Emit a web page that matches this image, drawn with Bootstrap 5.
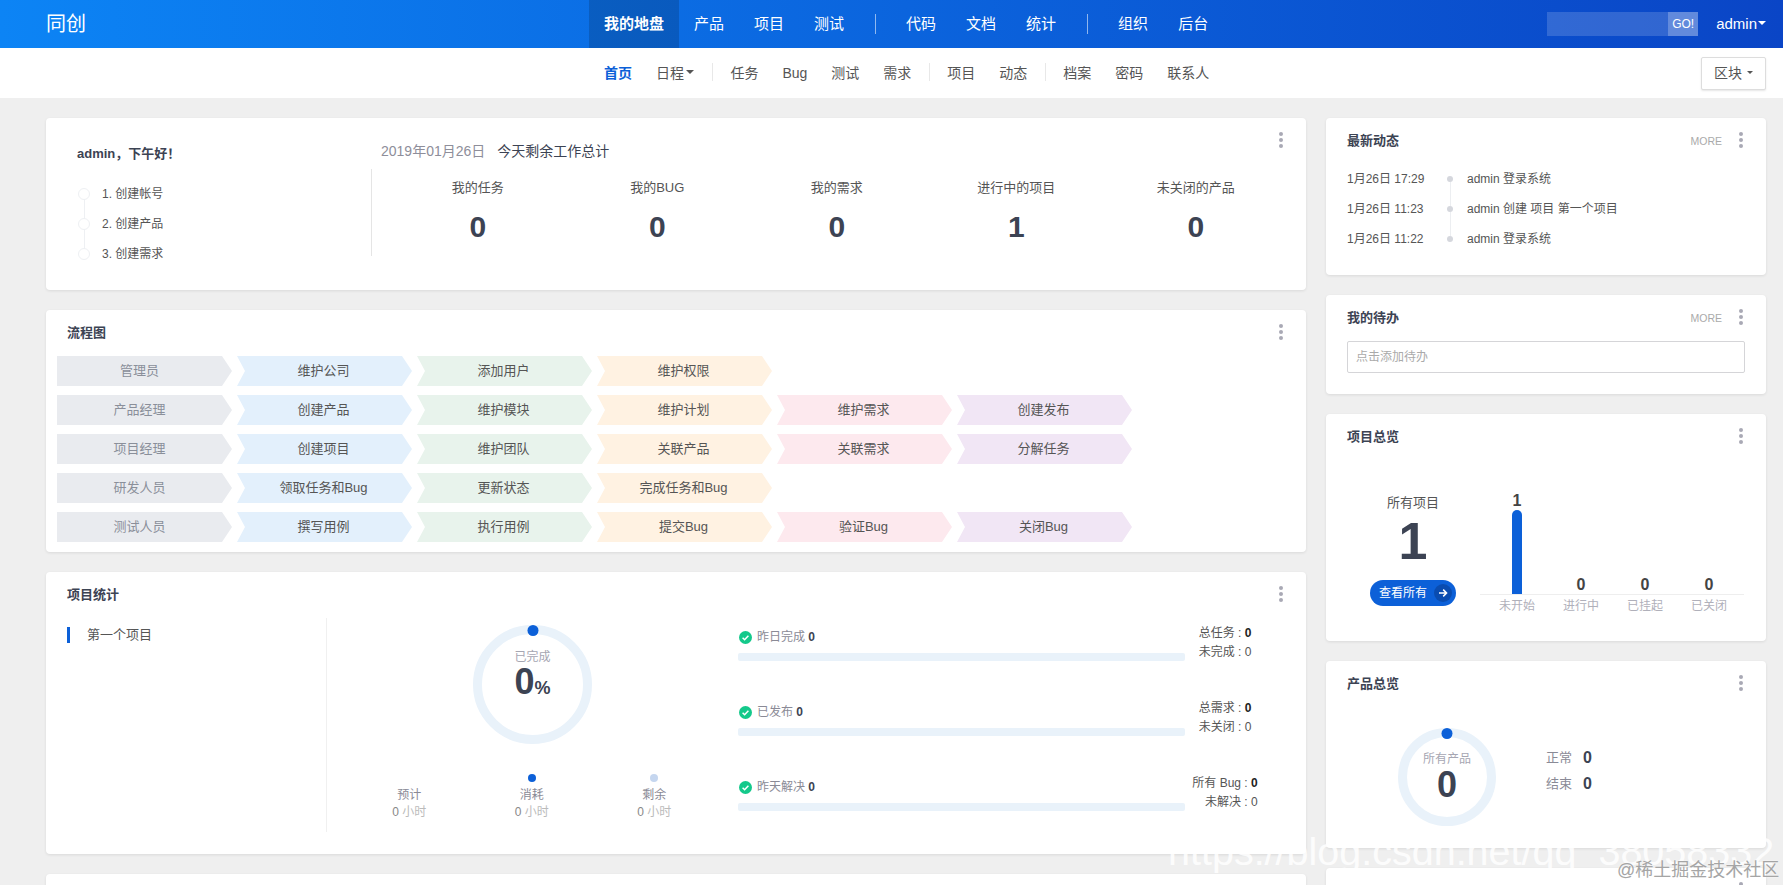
<!DOCTYPE html>
<html lang="zh-CN">
<head>
<meta charset="utf-8">
<title>同创</title>
<link href="https://cdn.jsdelivr.net/npm/bootstrap@5.3.0/dist/css/bootstrap.min.css" rel="stylesheet">
<style>
html,body{height:885px;overflow:hidden}
body{background:#efefef;font-family:"Liberation Sans","Noto Sans CJK SC",sans-serif;font-size:12px;color:#555;position:relative}
.top-bar{height:48px;background:linear-gradient(90deg,#0c84f5,#0a45c6);padding:0 17px 0 46px}
.brand-name{font-size:20px;color:#fff;width:40px;line-height:48px;margin-right:503px;white-space:nowrap}
.main-nav .nav-link{color:#fff;font-size:15px;line-height:48px;padding:0 15px}
.main-nav .nav-link.active{background:rgba(0,0,0,.16);font-weight:700}
.bar-sep{width:1px;height:20px;background:rgba(255,255,255,.55);margin:14px 15px 0 16px}
.search-box{width:151px;height:24px}
.search-box .form-control{height:24px;min-height:24px;background:rgba(255,255,255,.16);border:0;border-radius:0;padding:0}
.search-box .btn{width:30px;flex:none;height:24px;padding:0;border:0;border-radius:0;font-size:12px;color:#fff;background:rgba(255,255,255,.36)}
.user-link{color:#fff;font-size:15px;margin-left:18px;text-decoration:none}
.user-link::after{margin-left:1px;border-width:.28em .28em 0}
.sub-bar{height:50px;background:#fff;padding:0 17px 0 592px}
.sub-nav .nav-link{color:#555;font-size:14px;line-height:50px;padding:0 12px}
.sub-nav .nav-link.active{color:#0c60d8;font-weight:700}
.sub-nav .dropdown-toggle::after{margin-left:2.4px}
.sub-sep{width:1px;height:18px;background:#e8e8e8;margin:15px 5px 0 6px}
.block-btn{width:65px;height:33px;padding:0;font-size:14px;color:#555;background:#fff;border:1px solid #ddd;box-shadow:0 1px 2px rgba(0,0,0,.1);border-radius:2px}
.block-btn::after{border-width:.28em .28em 0;margin-left:5px}
.page-body{padding:20px 17px 0 46px;gap:20px}
.left-side{width:1260px;flex:none}
.right-side{width:440px;flex:none}
.panel{border:0;border-radius:4px;box-shadow:0 1px 3px rgba(0,0,0,.09);margin-bottom:20px;position:relative}
.panel-tail{height:120px}
.panel-head{height:46px;padding:13px 21px 0;display:flex;line-height:20px}
.panel-name{font-size:13px;font-weight:700;color:#3c4353}
.more-link{margin-left:auto;margin-right:23px;font-size:10.5px;color:#aaa;text-decoration:none}
.kebab{position:absolute;top:14px;right:23px;width:4px;height:16px;display:block}
.hello-panel{height:172px}
.hello-left{width:325px;padding:26px 0 0 31px;flex:none}
.hello-title{font-size:13px;font-weight:700;color:#3c4353;line-height:20px;margin-bottom:15px}
.step-row{height:30px;line-height:30px;position:relative;padding-left:25px;font-size:12px}
.step-row::before{content:"";position:absolute;left:1px;top:9px;width:12px;height:12px;border-radius:50%;background:#fff;border:1px solid #eef0f3;z-index:1}
.step-row:not(:last-child)::after{content:"";position:absolute;left:7px;top:20px;width:1px;height:20px;background:#eef0f3}
.hello-right{padding:23px 0 0;flex:1}
.today-line{line-height:20px;font-size:14px;padding-left:10px;color:#3c4353}
.today-date{color:#8e8e9a;margin-right:12px}
.count-row{margin-top:8px;height:87px;border-left:1px solid #e5e5e5;padding-left:16px}
.count-cell{width:179.5px;text-align:center;padding-top:9px}
.count-label{font-size:13px;line-height:20px}
.count-num{font-size:30px;font-weight:700;line-height:36px;margin-top:11px;color:#3c4353}
.flow-wrap{padding:0 0 1px 11px}
.flow-row{display:flex;gap:5px;margin-bottom:9px}
.flow-item{width:175px;height:30px;line-height:30px;text-align:center;font-size:13px;padding-right:2px;clip-path:polygon(0 0,165px 0,175px 50%,165px 100%,0 100%,8px 50%)}
.flow-role{background:#e9ebef;color:#8a8f9a;padding-right:10px;clip-path:polygon(0 0,165px 0,175px 50%,165px 100%,0 100%)}
.tone-blue{background:#e3f0fc}.tone-green{background:#e8f3ec}.tone-orange{background:#fff2e2}.tone-pink{background:#fde9ee}.tone-purple{background:#f1e6f5}
.stats-panel{height:282px}
.project-list{width:280px;flex:none;padding:9px 0 0 21px}
.project-item{border-left:3px solid #0c60d8;padding-left:17px;line-height:16px;font-size:13px}
.stats-mid{width:412px;flex:none;height:214px;border-left:1px solid #f0f0f0;padding-top:7px}
.dial{border-style:solid;border-color:#e9f2fa;border-radius:50%;position:relative;text-align:center}
.dial-lg{width:119px;height:119px;border-width:9px;margin:0 auto;padding-top:14px}
.dial-sm{width:98px;height:98px;border-width:9px;padding-top:13px;flex:none}
.dial-dot{position:absolute;left:50%;transform:translateX(-50%);top:-9px;width:11px;height:11px;border-radius:50%;background:#0c60d8}
.dial-cap{line-height:18px;color:#a6a6b2;font-size:12px}
.dial-num{font-size:36px;font-weight:700;line-height:32px;color:#3c4353}
.dial-num span{font-size:18px}
.dial-sm .dial-num{font-size:36px;line-height:40px;margin-top:-3px}
.time-row{margin-top:30px;padding:0 21px}
.time-cell{width:122.5px;text-align:center}
.time-dot{width:8px;height:8px;border-radius:50%;margin:0 auto 5px}
.time-used{background:#0c60d8}
.time-left{background:#c5d6ef}
.time-name{line-height:17px;color:#8a8a96}
.time-val{line-height:17px;color:#888}
.time-val span{color:#bbb}
.metric-row{height:75px;display:flex}
.metric-left{width:447px;padding-top:10px;flex:none}
.metric-label{line-height:18px;color:#8a8a96;display:flex;align-items:center;gap:5px;padding-left:1px}
.metric-label b{color:#3c4353}
.metric-track{height:8px;margin-top:7px;background:#e9f2fa;border-radius:2px}
.metric-side{width:80px;padding-top:6px;display:flex;justify-content:center}
.metric-meta{text-align:right;line-height:19px;white-space:nowrap}
.metric-meta b{color:#222}
.feed-row{height:30px;line-height:30px;padding-left:21px;display:flex;position:relative}
.feed-list{padding-bottom:21px}
.feed-time{width:100px;flex:none}
.feed-mark{width:6px;flex:none;position:relative;margin-right:14px}
.feed-mark::before{content:"";position:absolute;top:12px;left:0;width:6px;height:6px;border-radius:50%;background:#d5d7dd}
.feed-row:not(:last-child) .feed-mark::after{content:"";position:absolute;top:18px;left:3px;width:1px;height:24px;background:#eceef1}
.todo-wrap{padding:0 21px 21px}
.todo-input{height:32px;min-height:32px;font-size:12px;border-radius:2px;border-color:#d5d5d8;padding:0 8px}
.todo-input::placeholder{color:#aaa}
.overview-panel{height:227px}
.overview-left{width:154px;padding:34px 0 0 20px;flex:none;text-align:center}
.overview-cap{line-height:18px;font-size:13px}
.overview-num{font-size:52px;font-weight:700;line-height:56px;margin-top:1px;color:#3c4353}
.view-all{width:86px;height:26px;margin-top:11px;padding:0 4px 0 9px;font-size:12px;border:0;background:#0c60d8;display:inline-flex;align-items:center;justify-content:space-between}
.view-all i{width:18px;height:18px;border-radius:50%;background:#0a4cb0;display:flex;align-items:center;justify-content:center}
.chart-box{width:264px;margin-top:34px}
.chart-plot{height:101px;border-bottom:1px solid #eee;padding:0 3px 0 5px;display:flex;align-items:flex-end}
.chart-col{width:64px;text-align:center;display:flex;flex-direction:column;align-items:center}
.chart-val{font-size:16px;font-weight:700;line-height:16px;color:#444;margin-bottom:1px}
.chart-bar{width:10px;height:84px;border-radius:5px 5px 0 0;background:#0c60d8}
.chart-names{padding:2px 3px 0 5px;display:flex}
.chart-names span{width:64px;text-align:center;line-height:18px;color:#b0b0ba}
.product-wrap{display:flex;padding:21px 0 22px 72px}
.product-side{margin:17px 0 0 50px}
.product-line{line-height:26px;font-size:13px;color:#8a8a96;display:flex}
.product-line span{width:37px}
.product-line b{font-size:16px;color:#3c4353}
.mark-layer{position:absolute;left:1168px;top:827px;font-size:39.5px;color:rgba(255,255,255,.85);white-space:nowrap;line-height:48px;pointer-events:none}
.site-layer{position:absolute;left:1617px;top:858px;font-size:18px;line-height:24px;color:#a5a5a5;text-shadow:0 0 2px #fff;white-space:nowrap;pointer-events:none}
</style>
</head>
<body>
<header class="top-bar d-flex align-items-center">
  <div class="brand-name">同创</div>
  <ul class="nav main-nav flex-nowrap">
    <li class="nav-item"><a class="nav-link active" href="#">我的地盘</a></li>
    <li class="nav-item"><a class="nav-link" href="#">产品</a></li>
    <li class="nav-item"><a class="nav-link" href="#">项目</a></li>
    <li class="nav-item"><a class="nav-link" href="#">测试</a></li>
    <li class="bar-sep"></li>
    <li class="nav-item"><a class="nav-link" href="#">代码</a></li>
    <li class="nav-item"><a class="nav-link" href="#">文档</a></li>
    <li class="nav-item"><a class="nav-link" href="#">统计</a></li>
    <li class="bar-sep"></li>
    <li class="nav-item"><a class="nav-link" href="#">组织</a></li>
    <li class="nav-item"><a class="nav-link" href="#">后台</a></li>
  </ul>
  <div class="ms-auto d-flex align-items-center">
    <div class="search-box d-flex"><input class="form-control" type="text" aria-label="搜索"><button class="btn" type="button">GO!</button></div>
    <a class="user-link dropdown-toggle" href="#">admin</a>
  </div>
</header>
<div class="sub-bar d-flex align-items-center">
  <ul class="nav sub-nav flex-nowrap">
    <li class="nav-item"><a class="nav-link active" href="#">首页</a></li>
    <li class="nav-item"><a class="nav-link dropdown-toggle" href="#">日程</a></li>
    <li class="sub-sep"></li>
    <li class="nav-item"><a class="nav-link" href="#">任务</a></li>
    <li class="nav-item"><a class="nav-link" href="#">Bug</a></li>
    <li class="nav-item"><a class="nav-link" href="#">测试</a></li>
    <li class="nav-item"><a class="nav-link" href="#">需求</a></li>
    <li class="sub-sep"></li>
    <li class="nav-item"><a class="nav-link" href="#">项目</a></li>
    <li class="nav-item"><a class="nav-link" href="#">动态</a></li>
    <li class="sub-sep"></li>
    <li class="nav-item"><a class="nav-link" href="#">档案</a></li>
    <li class="nav-item"><a class="nav-link" href="#">密码</a></li>
    <li class="nav-item"><a class="nav-link" href="#">联系人</a></li>
  </ul>
  <button class="btn block-btn dropdown-toggle ms-auto" type="button">区块</button>
</div>
<main class="page-body d-flex align-items-start">
  <div class="left-side">
    <section class="card panel hello-panel flex-row">
      <svg class="kebab" viewBox="0 0 4 16"><circle cx="2" cy="2" r="2" fill="#a9a9b5"/><circle cx="2" cy="8" r="2" fill="#a9a9b5"/><circle cx="2" cy="14" r="2" fill="#a9a9b5"/></svg>
      <div class="hello-left">
        <div class="hello-title">admin，下午好！</div>
        <div class="step-row">1. 创建帐号</div>
        <div class="step-row">2. 创建产品</div>
        <div class="step-row">3. 创建需求</div>
      </div>
      <div class="hello-right">
        <div class="today-line"><span class="today-date">2019年01月26日</span>今天剩余工作总计</div>
        <div class="count-row d-flex">
          <div class="count-cell"><div class="count-label">我的任务</div><div class="count-num">0</div></div>
          <div class="count-cell"><div class="count-label">我的BUG</div><div class="count-num">0</div></div>
          <div class="count-cell"><div class="count-label">我的需求</div><div class="count-num">0</div></div>
          <div class="count-cell"><div class="count-label">进行中的项目</div><div class="count-num">1</div></div>
          <div class="count-cell"><div class="count-label">未关闭的产品</div><div class="count-num">0</div></div>
        </div>
      </div>
    </section>
    <section class="card panel">
      <svg class="kebab" viewBox="0 0 4 16"><circle cx="2" cy="2" r="2" fill="#a9a9b5"/><circle cx="2" cy="8" r="2" fill="#a9a9b5"/><circle cx="2" cy="14" r="2" fill="#a9a9b5"/></svg>
      <div class="panel-head"><span class="panel-name">流程图</span></div>
      <div class="flow-wrap">
        <div class="flow-row"><div class="flow-item flow-role">管理员</div><div class="flow-item tone-blue">维护公司</div><div class="flow-item tone-green">添加用户</div><div class="flow-item tone-orange">维护权限</div></div>
        <div class="flow-row"><div class="flow-item flow-role">产品经理</div><div class="flow-item tone-blue">创建产品</div><div class="flow-item tone-green">维护模块</div><div class="flow-item tone-orange">维护计划</div><div class="flow-item tone-pink">维护需求</div><div class="flow-item tone-purple">创建发布</div></div>
        <div class="flow-row"><div class="flow-item flow-role">项目经理</div><div class="flow-item tone-blue">创建项目</div><div class="flow-item tone-green">维护团队</div><div class="flow-item tone-orange">关联产品</div><div class="flow-item tone-pink">关联需求</div><div class="flow-item tone-purple">分解任务</div></div>
        <div class="flow-row"><div class="flow-item flow-role">研发人员</div><div class="flow-item tone-blue">领取任务和Bug</div><div class="flow-item tone-green">更新状态</div><div class="flow-item tone-orange">完成任务和Bug</div></div>
        <div class="flow-row"><div class="flow-item flow-role">测试人员</div><div class="flow-item tone-blue">撰写用例</div><div class="flow-item tone-green">执行用例</div><div class="flow-item tone-orange">提交Bug</div><div class="flow-item tone-pink">验证Bug</div><div class="flow-item tone-purple">关闭Bug</div></div>
      </div>
    </section>
    <section class="card panel stats-panel">
      <svg class="kebab" viewBox="0 0 4 16"><circle cx="2" cy="2" r="2" fill="#a9a9b5"/><circle cx="2" cy="8" r="2" fill="#a9a9b5"/><circle cx="2" cy="14" r="2" fill="#a9a9b5"/></svg>
      <div class="panel-head"><span class="panel-name">项目统计</span></div>
      <div class="d-flex">
        <div class="project-list"><div class="project-item">第一个项目</div></div>
        <div class="stats-mid">
          <div class="dial dial-lg">
            <span class="dial-dot"></span>
            <div class="dial-cap">已完成</div>
            <div class="dial-num">0<span>%</span></div>
          </div>
          <div class="time-row d-flex">
            <div class="time-cell"><div class="time-dot"></div><div class="time-name">预计</div><div class="time-val">0 <span>小时</span></div></div>
            <div class="time-cell"><div class="time-dot time-used"></div><div class="time-name">消耗</div><div class="time-val">0 <span>小时</span></div></div>
            <div class="time-cell"><div class="time-dot time-left"></div><div class="time-name">剩余</div><div class="time-val">0 <span>小时</span></div></div>
          </div>
        </div>
        <div class="flex-grow-1">
          <div class="metric-row">
            <div class="metric-left">
              <div class="metric-label"><svg width="13" height="13" viewBox="0 0 13 13"><circle cx="6.5" cy="6.5" r="6.5" fill="#14c98b"/><path d="M3.6 6.7l2 2 3.8-4" fill="none" stroke="#fff" stroke-width="1.5"/></svg><span>昨日完成 <b>0</b></span></div>
              <div class="metric-track"></div>
            </div>
            <div class="metric-side"><div class="metric-meta">总任务 : <b>0</b><br>未完成 : 0</div></div>
          </div>
          <div class="metric-row">
            <div class="metric-left">
              <div class="metric-label"><svg width="13" height="13" viewBox="0 0 13 13"><circle cx="6.5" cy="6.5" r="6.5" fill="#14c98b"/><path d="M3.6 6.7l2 2 3.8-4" fill="none" stroke="#fff" stroke-width="1.5"/></svg><span>已发布 <b>0</b></span></div>
              <div class="metric-track"></div>
            </div>
            <div class="metric-side"><div class="metric-meta">总需求 : <b>0</b><br>未关闭 : 0</div></div>
          </div>
          <div class="metric-row">
            <div class="metric-left">
              <div class="metric-label"><svg width="13" height="13" viewBox="0 0 13 13"><circle cx="6.5" cy="6.5" r="6.5" fill="#14c98b"/><path d="M3.6 6.7l2 2 3.8-4" fill="none" stroke="#fff" stroke-width="1.5"/></svg><span>昨天解决 <b>0</b></span></div>
              <div class="metric-track"></div>
            </div>
            <div class="metric-side"><div class="metric-meta">所有 Bug : <b>0</b><br>未解决 : 0</div></div>
          </div>
        </div>
      </div>
    </section>
    <section class="card panel panel-tail"></section>
  </div>
  <div class="right-side">
    <section class="card panel">
      <svg class="kebab" viewBox="0 0 4 16"><circle cx="2" cy="2" r="2" fill="#a9a9b5"/><circle cx="2" cy="8" r="2" fill="#a9a9b5"/><circle cx="2" cy="14" r="2" fill="#a9a9b5"/></svg>
      <div class="panel-head"><span class="panel-name">最新动态</span><a class="more-link" href="#">MORE</a></div>
      <div class="feed-list">
        <div class="feed-row"><span class="feed-time">1月26日 17:29</span><span class="feed-mark"></span><span>admin 登录系统</span></div>
        <div class="feed-row"><span class="feed-time">1月26日 11:23</span><span class="feed-mark"></span><span>admin 创建 项目 第一个项目</span></div>
        <div class="feed-row"><span class="feed-time">1月26日 11:22</span><span class="feed-mark"></span><span>admin 登录系统</span></div>
      </div>
    </section>
    <section class="card panel">
      <svg class="kebab" viewBox="0 0 4 16"><circle cx="2" cy="2" r="2" fill="#a9a9b5"/><circle cx="2" cy="8" r="2" fill="#a9a9b5"/><circle cx="2" cy="14" r="2" fill="#a9a9b5"/></svg>
      <div class="panel-head"><span class="panel-name">我的待办</span><a class="more-link" href="#">MORE</a></div>
      <div class="todo-wrap"><input class="form-control todo-input" type="text" placeholder="点击添加待办"></div>
    </section>
    <section class="card panel overview-panel">
      <svg class="kebab" viewBox="0 0 4 16"><circle cx="2" cy="2" r="2" fill="#a9a9b5"/><circle cx="2" cy="8" r="2" fill="#a9a9b5"/><circle cx="2" cy="14" r="2" fill="#a9a9b5"/></svg>
      <div class="panel-head"><span class="panel-name">项目总览</span></div>
      <div class="d-flex">
        <div class="overview-left">
          <div class="overview-cap">所有项目</div>
          <div class="overview-num">1</div>
          <button class="btn btn-primary rounded-pill view-all" type="button">查看所有<i><svg width="10" height="10" viewBox="0 0 10 10"><path d="M1 5h7.5M5.2 1.6L8.6 5 5.2 8.4" fill="none" stroke="#fff" stroke-width="1.5"/></svg></i></button>
        </div>
        <div class="chart-box">
          <div class="chart-plot">
            <div class="chart-col"><span class="chart-val">1</span><span class="chart-bar"></span></div>
            <div class="chart-col"><span class="chart-val">0</span></div>
            <div class="chart-col"><span class="chart-val">0</span></div>
            <div class="chart-col"><span class="chart-val">0</span></div>
          </div>
          <div class="chart-names"><span>未开始</span><span>进行中</span><span>已挂起</span><span>已关闭</span></div>
        </div>
      </div>
    </section>
    <section class="card panel">
      <svg class="kebab" viewBox="0 0 4 16"><circle cx="2" cy="2" r="2" fill="#a9a9b5"/><circle cx="2" cy="8" r="2" fill="#a9a9b5"/><circle cx="2" cy="14" r="2" fill="#a9a9b5"/></svg>
      <div class="panel-head"><span class="panel-name">产品总览</span></div>
      <div class="product-wrap">
        <div class="dial dial-sm">
          <span class="dial-dot"></span>
          <div class="dial-cap">所有产品</div>
          <div class="dial-num">0</div>
        </div>
        <div class="product-side">
          <div class="product-line"><span>正常</span><b>0</b></div>
          <div class="product-line"><span>结束</span><b>0</b></div>
        </div>
      </div>
    </section>
    <section class="card panel panel-tail">
      <svg class="kebab" viewBox="0 0 4 16"><circle cx="2" cy="2" r="2" fill="#a9a9b5"/><circle cx="2" cy="8" r="2" fill="#a9a9b5"/><circle cx="2" cy="14" r="2" fill="#a9a9b5"/></svg>
    </section>
  </div>
</main>
<div class="mark-layer">https://blog.csdn.net/qq_38058332</div>
<div class="site-layer">@稀土掘金技术社区</div>
</body>
</html>
